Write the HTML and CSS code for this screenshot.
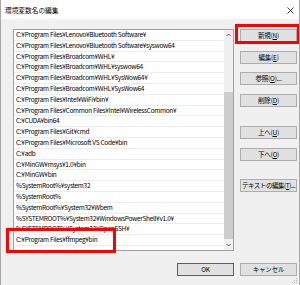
FILE: index.html
```html
<html>
	<head>
		<title>環境変数名の編集</title>
		<link rel="stylesheet" href="styles.css">
	</head>
	<body>
		<div class="window">
			<div class="titlebar">
				<span class="title">環境変数名の編集</span>
				<svg class="close" width="7" height="7" viewBox="0 0 7 7"><path d="M0.5 0.5L6.5 6.5M6.5 0.5L0.5 6.5" stroke="#222" stroke-width="0.9"/></svg>
			</div>
			<div class="content">
				<div class="main">
					<div class="list">
						<ul class="rows">
							<li>C:¥Program Files¥Lenovo¥Bluetooth Software¥</li>
							<li>C:¥Program Files¥Lenovo¥Bluetooth Software¥syswow64</li>
							<li>C:¥Program Files¥Broadcom¥WHL¥</li>
							<li>C:¥Program Files¥Broadcom¥WHL¥syswow64</li>
							<li>C:¥Program Files¥Broadcom¥WHL¥SysWow64¥</li>
							<li>C:¥Program Files¥Broadcom¥WHL¥SysWow64</li>
							<li>C:¥Program Files¥Intel¥WiFi¥bin¥</li>
							<li>C:¥Program Files¥Common Files¥Intel¥WirelessCommon¥</li>
							<li>C:¥CUDA¥bin64</li>
							<li>C:¥Program Files¥Git¥cmd</li>
							<li>C:¥Program Files¥Microsoft VS Code¥bin</li>
							<li>C:¥adb</li>
							<li>C:¥MinGW¥msys¥1.0¥bin</li>
							<li>C:¥MinGW¥bin</li>
							<li>%SystemRoot%¥system32</li>
							<li>%SystemRoot%</li>
							<li>%SystemRoot%¥System32¥Wbem</li>
							<li>%SYSTEMROOT%¥System32¥WindowsPowerShell¥v1.0¥</li>
							<li>%SYSTEMROOT%¥System32¥OpenSSH¥</li>
							<li>C:¥Program Files¥ffmpeg¥bin</li>
						</ul>
						<div class="scrollbar">
							<svg class="arrow" width="9" height="10" viewBox="0 0 9 10"><path d="M2.5 6L4.5 4L6.5 6" fill="none" stroke="#606060" stroke-width="1"/></svg>
							<div class="track"><div class="thumb"></div></div>
							<svg class="arrow" width="9" height="10" viewBox="0 0 9 10"><path d="M2.5 4L4.5 6L6.5 4" fill="none" stroke="#606060" stroke-width="1"/></svg>
						</div>
					</div>
					<div class="side">
						<button class="btn">新規(<u>N</u>)</button>
						<button class="btn">編集(<u>E</u>)</button>
						<button class="btn">参照(<u>O</u>)...</button>
						<button class="btn">削除(<u>D</u>)</button>
						<button class="btn far">上へ(<u>U</u>)</button>
						<button class="btn">下へ(<u>O</u>)</button>
						<button class="btn far wide">テキストの編集(<u>T</u>)...</button>
					</div>
				</div>
				<div class="footer">
					<button class="btn default">OK</button>
					<button class="btn">キャンセル</button>
				</div>
			</div>
			<div class="mark mark-new"></div>
			<div class="mark mark-path"></div>
			<svg class="grip" width="8" height="8" viewBox="0 0 8 8">
				<rect x="6" y="2" width="1" height="1" fill="#b4b4b4"/>
				<rect x="4" y="4" width="1" height="1" fill="#b4b4b4"/>
				<rect x="6" y="4" width="1" height="1" fill="#b4b4b4"/>
				<rect x="2" y="6" width="1" height="1" fill="#b4b4b4"/>
				<rect x="4" y="6" width="1" height="1" fill="#b4b4b4"/>
				<rect x="6" y="6" width="1" height="1" fill="#b4b4b4"/>
			</svg>
		</div>
	</body>
</html>
```

FILE: styles.css
```css
body {
	margin: 0;
	font-family: "Noto Sans CJK JP", "Noto Sans", sans-serif;
	font-size: 6.5px;
	color: #000;
}
.window {
	position: relative;
	width: 300px;
	height: 285px;
	box-sizing: border-box;
	background: #f0f0f0;
	border-left: 1px solid #a8a8a8;
	border-right: 1px solid #a8a8a8;
	overflow: hidden;
}
.titlebar {
	height: 18px;
	background: #fff;
	display: flex;
	align-items: center;
	justify-content: space-between;
	padding: 1px 5px 0 4px;
}
.title {
	font-size: 6.7px;
}
.content {
	padding: 10px 2px 0 12px;
}
.main {
	display: flex;
}
.list {
	width: 221px;
	height: 222px;
	box-sizing: border-box;
	border: 1px solid #a0a0a0;
	background: #fff;
	display: flex;
}
.rows {
	flex: 1;
	list-style: none;
	margin: 0;
	padding: 0;
	overflow: hidden;
}
.rows li {
	height: 10.8px;
	box-sizing: border-box;
	line-height: 9.8px;
	border-bottom: 1px solid #ececec;
	padding-left: 2px;
	letter-spacing: -0.3px;
	white-space: nowrap;
}
.scrollbar {
	width: 9px;
	background: #f0f0f0;
	display: flex;
	flex-direction: column;
}
.arrow {
	display: block;
}
.track {
	flex: 1;
	display: flex;
	flex-direction: column;
	padding: 52px 0 1px;
}
.thumb {
	flex: 1;
	background: #cdcdcd;
}
.side {
	display: flex;
	flex-direction: column;
	margin-left: 6px;
}
.btn {
	width: 57px;
	height: 13px;
	padding: 0;
	box-sizing: border-box;
	background: #e1e1e1;
	border: 1px solid #adadad;
	font: inherit;
	color: #000;
	line-height: 11px;
	letter-spacing: -0.2px;
	text-align: center;
	white-space: nowrap;
	overflow: hidden;
}
.btn.wide {
	letter-spacing: -0.45px;
}
.side .btn + .btn {
	margin-top: 8.7px;
}
.side .btn.far {
	margin-top: 19px;
}
.side .btn:last-child {
	margin-top: 18.2px;
}
.footer {
	display: flex;
	justify-content: flex-end;
	gap: 6px;
	margin-top: 12px;
}
.btn.default {
	border-color: #0078d7;
}
.mark {
	position: absolute;
	box-sizing: border-box;
	border: 3px solid #ff0000;
}
.mark-new {
	left: 234px;
	top: 24px;
	width: 65px;
	height: 20px;
}
.mark-path {
	left: 5px;
	top: 228px;
	width: 110px;
	height: 25px;
}
.grip {
	position: absolute;
	right: 1px;
	bottom: 1px;
}
```
